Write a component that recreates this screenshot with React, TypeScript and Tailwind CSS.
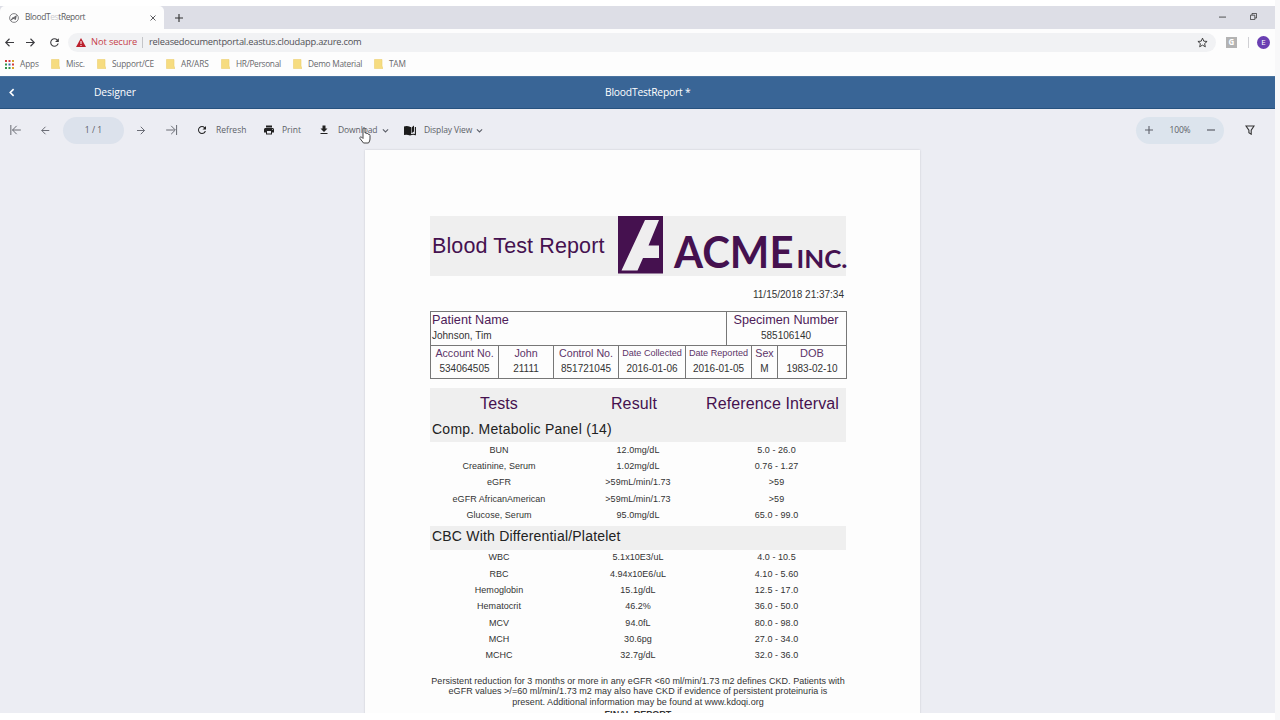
import React from "react";
import { MdFileDownload, MdPrint, MdRefresh } from "react-icons/md";

const bookmarks: [string, string, string][] = [
  ["Misc.", "w-[46px]", "tracking-[-0.2px]"],
  ["Support/CE", "w-[69px]", "tracking-[-0.2px]"],
  ["AR/ARS", "w-[55px]", "tracking-[-0.1px]"],
  ["HR/Personal", "w-[72px]", "tracking-[-0.3px]"],
  ["Demo Material", "w-[81px]", "tracking-[-0.25px]"],
  ["TAM", "w-[50px]", "tracking-[-0.2px]"],
];

const metabolic = [
  ["BUN", "12.0mg/dL", "5.0 - 26.0"],
  ["Creatinine, Serum", "1.02mg/dL", "0.76 - 1.27"],
  ["eGFR", ">59mL/min/1.73", ">59"],
  ["eGFR AfricanAmerican", ">59mL/min/1.73", ">59"],
  ["Glucose, Serum", "95.0mg/dL", "65.0 - 99.0"],
];

const cbc = [
  ["WBC", "5.1x10E3/uL", "4.0 - 10.5"],
  ["RBC", "4.94x10E6/uL", "4.10 - 5.60"],
  ["Hemoglobin", "15.1g/dL", "12.5 - 17.0"],
  ["Hematocrit", "46.2%", "36.0 - 50.0"],
  ["MCV", "94.0fL", "80.0 - 98.0"],
  ["MCH", "30.6pg", "27.0 - 34.0"],
  ["MCHC", "32.7g/dL", "32.0 - 36.0"],
];

const patientCells: [string, string, string, string][] = [
  ["Account No.", "534064505", "w-[68px]", "text-[10.7px]"],
  ["John", "21111", "w-[55px]", "text-[10.7px]"],
  ["Control No.", "851721045", "w-[65px]", "text-[10.7px]"],
  ["Date Collected", "2016-01-06", "w-[67px]", "text-[9.1px]"],
  ["Date Reported", "2016-01-05", "w-[66px]", "text-[9.1px]"],
  ["Sex", "M", "w-[26px]", "text-[10.7px]"],
  ["DOB", "1983-02-10", "w-[69px]", "text-[11px]"],
];

type IconProps = { d: string; size?: string; stroke?: number };

function Line({ d, size = "size-3", stroke = 1 }: IconProps) {
  return (
    <svg viewBox="0 0 12 12" className={size + " block shrink-0 overflow-visible"} fill="none" stroke="currentColor" strokeWidth={stroke}>
      <path d={d} />
    </svg>
  );
}

function Folder() {
  return (
    <svg viewBox="0 0 9 10" className="h-[10px] w-[9px] shrink-0">
      <path d="M0.5 0.5h7.5v6.5l1 2.5H0.5z" fill="#f6dc80" stroke="#ecd070" strokeWidth="0.6" />
    </svg>
  );
}

function Browser() {
  return (
    <header className="shrink-0 text-[#5c5c60]">
      <div className="flex h-[23px] bg-[#dddee6]">
        <div className="flex w-[164px] items-center rounded-t-[5px] bg-[#fdfdfd] pl-[9px]">
          <svg viewBox="0 0 10 10" className="size-[10px] shrink-0" fill="none" stroke="#66666a" strokeWidth="0.8">
            <circle cx="5" cy="5" r="4.4" />
            <path d="M2 7.2L4.2 5M4 5.2L7 3.2L6.4 6.2L4 5z" strokeWidth="1.2" />
          </svg>
          <span className="ml-[6px] w-[125px] text-[8.4px] tracking-[-0.35px]">
            BloodT<span className="text-[#cfcfd2]">es</span>tReport
          </span>
          <Line d="M1 1L11 11M11 1L1 11" size="size-[6px]" stroke={2} />
        </div>
        <div className="flex flex-1 items-center pl-[11px] text-[#333]">
          <Line d="M6 0V12M0 6H12" size="size-[8px]" stroke={1.7} />
          <div className="ml-auto flex items-center pb-[3px]">
            <Line d="M0 7H12" size="size-[7px]" stroke={1.4} />
            <svg viewBox="0 0 8 8" className="ml-[24px] mr-[18px] size-[7px]" fill="none" stroke="currentColor" strokeWidth="0.9">
              <path d="M0.5 2.5h5v5h-5zM2.3 2.3V0.5h5.2v5.2H5.7" />
            </svg>
          </div>
        </div>
      </div>
      <div className="flex h-[26px] items-center bg-[#fdfdfd] pl-[5px] text-[#3c3c40]">
        <div className="w-[21px]"><Line d="M12 6H1M6 1L1 6L6 11" size="size-[9px]" stroke={1.5} /></div>
        <div className="w-[22px]"><Line d="M0 6H11M6 1L11 6L6 11" size="size-[9px]" stroke={1.5} /></div>
        <div className="w-[20px] pr-[7px]"><MdRefresh className="size-[13px]" /></div>
        <div className="flex h-[19px] w-[1148px] items-center rounded-full bg-[#f1f2f4] pl-[8px] text-[9.3px]">
          <svg viewBox="0 0 10 9" className="h-[9px] w-[10px] shrink-0">
            <path d="M5 0L10 9H0z" fill="#bb1f2c" />
            <path d="M5 3V6M5 7V8" stroke="#fff" strokeWidth="1" />
          </svg>
          <span className="ml-[5px] w-[51px] whitespace-nowrap text-[#c6404a] tracking-[-0.1px]">Not secure</span>
          <span className="h-[11px] w-px bg-[#c4c5c8]" />
          <span className="ml-[6px] text-[#505055] tracking-[-0.22px]">releasedocumentportal.eastus.cloudapp.azure.com</span>
          <svg viewBox="0 0 24 24" className="ml-auto mr-[8px] size-[11px]" fill="none" stroke="#333" strokeWidth="2">
            <path d="M12 2.5l2.8 6.6 7.2.6-5.400 4.700 1.600 7L12 17.700l-6.200 3.700 1.600-7L2 9.700l7.200-.6z" />
          </svg>
        </div>
        <div className="ml-[10px] flex h-[11px] w-[11px] items-center justify-center bg-[#b3b3b3] text-[8px] font-bold text-white">G</div>
        <div className="ml-[11px] h-[11px] w-px bg-[#d0d0d4]" />
        <div className="ml-[8px] flex size-[13px] items-center justify-center rounded-full bg-[#6a3fb2] text-[8px] text-white">E</div>
      </div>
      <div className="flex h-[21px] items-center bg-[#fdfdfd] pb-[3px] pl-[5px] text-[8.3px] text-[#68686c]">
        <svg viewBox="0 0 9 9" className="mr-[6px] size-[9px]">
          {["#d23b3b", "#d23b3b", "#d6a52a", "#31934a", "#3a62b8", "#d23b3b", "#31934a", "#31934a", "#d6a52a"].map((c, i) => (
            <rect key={i} x={(i % 3) * 3.5} y={Math.floor(i / 3) * 3.5} width="2" height="2" fill={c} />
          ))}
        </svg>
        <span className="w-[31px] tracking-[-0.1px]">Apps</span>
        {bookmarks.map(([name, w, tracking]) => (
          <div key={name} className={"flex items-center gap-[6px] " + w}>
            <Folder />
            <span className={"whitespace-nowrap " + tracking}>{name}</span>
          </div>
        ))}
      </div>
    </header>
  );
}

function Toolbar() {
  return (
    <div className="flex h-[41px] shrink-0 items-center pl-[10px] pt-px text-[8.5px] text-[#5c5f68]">
      <div className="w-[31px]"><Line d="M1 0V12M13 6H3M8 1L3 6L8 11" size="size-[10px]" stroke={1.1} /></div>
      <div className="w-[22px]"><Line d="M11 6H1M6 1L1 6L6 11" size="size-[9px]" stroke={1.2} /></div>
      <div className="flex h-[27px] w-[61px] items-center justify-center rounded-full bg-[#dce2ec]">1 / 1</div>
      <div className="ml-[13px] w-[30px]"><Line d="M0 6H10M5 1L10 6L5 11" size="size-[9px]" stroke={1.2} /></div>
      <div className="w-[29px]"><Line d="M11.500 0V12M-1 6H9M5 1L10 6L5 11" size="size-[10px]" stroke={1.1} /></div>
      <MdRefresh className="size-[12px] text-[#222]" />
      <span className="ml-[8px] w-[47px]">Refresh</span>
      <MdPrint className="size-[12px] text-[#222]" />
      <span className="ml-[7px] w-[36px]">Print</span>
      <MdFileDownload className="size-[12px] text-[#222]" />
      <span className="ml-[8px] w-[44px] tracking-[-0.1px]">Download</span>
      <Line d="M1.500 4L6 8.500L10.500 4" size="size-[7px]" stroke={1.8} />
      <svg viewBox="0 0 12 11" className="ml-[15px] h-[11px] w-[12px] text-[#1c1c1c]">
        <path d="M0 1.500Q3 .500 6 1.800V10.500Q3 9.300 0 10z" fill="currentColor" />
        <path d="M6 9.900Q9 8.900 11.400 9.600V2M6.500 10V2" fill="none" stroke="currentColor" strokeWidth="1.100" />
        <path d="M7.600 2.500L10 .500V6.500L7.600 8.300z" fill="currentColor" />
      </svg>
      <span className="ml-[8px] w-[52px] whitespace-nowrap tracking-[-0.1px]">Display View</span>
      <Line d="M1.500 4L6 8.500L10.500 4" size="size-[7px]" stroke={1.8} />
      <div className="ml-auto mr-[21px] flex h-[27px] w-[88px] items-center justify-between rounded-full bg-[#dce4ed] px-[9px]">
        <Line d="M6 0V12M0 6H12" size="size-[8px]" stroke={1.600} />
        <span className="tracking-[-0.2px]">100%</span>
        <Line d="M0 6H12" size="size-[8px]" stroke={1.800} />
      </div>
      <svg viewBox="0 0 10 10" className="mr-[20px] size-[10px]" fill="none" stroke="#333" strokeWidth="1.100">
        <path d="M1 1H9L6.200 5.200V9.200L3.900 7.800V5.200z" />
      </svg>
    </div>
  );
}

function AcmeLogo() {
  return (
    <svg viewBox="0 0 229 60" className="h-[60px] w-[229px] shrink-0 overflow-visible" fill="#45114f">
      <rect x="1" y="0" width="45" height="57.500" />
      <path d="M28 4H42L31.500 29.500H42V42H26L20.500 54.500H4.500z" fill="#efeeef" />
      <g fontFamily="Lato, sans-serif" fontWeight="700">
        <text x="57" y="52" fontSize="44.500" textLength="119.500" lengthAdjust="spacingAndGlyphs">ACME</text>
        <text x="179.500" y="52" fontSize="25.500" textLength="51" lengthAdjust="spacingAndGlyphs">INC.</text>
      </g>
    </svg>
  );
}

function Results({ rows }: { rows: string[][] }) {
  return (
    <>
      {rows.map((row) => (
        <div key={row[0]} className="flex h-[16.33px] items-center text-center text-[9px] leading-none tracking-[0.040px] text-[#333]">
          <span className="w-[138px]">{row[0]}</span>
          <span className="w-[140px]">{row[1]}</span>
          <span className="w-[137px]">{row[2]}</span>
        </div>
      ))}
    </>
  );
}

function Report() {
  return (
    <article className="ml-[365px] h-[600px] w-[555px] bg-[#fdfdfd] pl-[65px] pr-[74px] pt-[66px] font-['Liberation_Sans',sans-serif] shadow-[0_0_2px_rgba(0,0,0,0.15)]">
      <div className="flex h-[60px] items-center bg-[#efefef] pl-[2px]">
        <h1 className="w-[185px] shrink-0 whitespace-nowrap text-[21.500px] tracking-[0.120px] text-[#45114f]">Blood Test Report</h1>
        <AcmeLogo />
      </div>
      <p className="mt-[11px] h-[15px] pr-[2px] text-right text-[10px] leading-[15px] text-[#333]">11/15/2018 21:37:34</p>
      <section className="mt-[9px] w-[417px] border border-[#777]">
        <div className="flex h-[34px] border-b border-[#777]">
          <div className="w-[296px] border-r border-[#777] pl-px">
            <p className="h-[17px] text-[12.700px] leading-[17px] text-[#4d2058]">Patient Name</p>
            <p className="text-[10px] leading-[14px] text-[#333]">Johnson, Tim</p>
          </div>
          <div className="flex-1 pr-px text-center">
            <p className="h-[17px] text-[12.700px] leading-[17px] text-[#4d2058]">Specimen Number</p>
            <p className="text-[10px] leading-[14px] text-[#333]">585106140</p>
          </div>
        </div>
        <div className="flex h-[32px]">
          {patientCells.map(([label, value, w, size]) => (
            <div key={label} className={"shrink-0 whitespace-nowrap border-r border-[#777] text-center last:shrink last:border-r-0 " + w}>
              <p className={"h-[15px] leading-[14px] text-[#5c3468] " + size}>{label}</p>
              <p className="text-[10px] leading-[16px] text-[#333]">{value}</p>
            </div>
          ))}
        </div>
      </section>
      <section className="mt-[9px] h-[54px] bg-[#efefef]">
        <div className="flex h-[32px] items-center text-center text-[16px] tracking-[0.130px] text-[#45114f]">
          <span className="w-[138px]">Tests</span>
          <span className="w-[132px]">Result</span>
          <span className="w-[145px]">Reference Interval</span>
        </div>
        <h2 className="pl-[2px] text-[14px] leading-[18px] tracking-[0.250px] text-[#222]">Comp. Metabolic Panel (14)</h2>
      </section>
      <Results rows={metabolic} />
      <h2 className="mt-[2px] h-[24px] bg-[#efefef] pl-[2px] text-[14px] leading-[20px] tracking-[0.200px] text-[#222]">CBC With Differential/Platelet</h2>
      <Results rows={cbc} />
      <div className="mt-[12px] whitespace-nowrap text-center text-[9px] leading-[10.330px] tracking-[0.040px] text-[#333]">
        <p>Persistent reduction for 3 months or more in any eGFR &lt;60 ml/min/1.73 m2 defines CKD. Patients with</p>
        <p>eGFR values &gt;/=60 ml/min/1.73 m2 may also have CKD if evidence of persistent proteinuria is</p>
        <p>present. Additional information may be found at www.kdoqi.org</p>
        <p className="mt-[2px] font-bold">FINAL REPORT</p>
      </div>
    </article>
  );
}

export default function App() {
  return (
    <div className="relative h-[720px] w-[1280px] overflow-hidden bg-[#f8f8f9] font-['Open_Sans','Noto_Sans',sans-serif]">
      <div className="flex h-[720px] w-[1275px] flex-col bg-white pb-[7px] pt-[6px]">
        <Browser />
        <nav className="flex h-[33px] shrink-0 items-center border-y border-t-[#4a739f] border-b-[#27527f] bg-[#396596] pl-[8px] text-[10.300px] text-white">
          <div className="w-[86px]"><Line d="M7.500 1.500L3 6L7.500 10.500" size="size-[9px]" stroke={2.200} /></div>
          <span className="w-[511px] tracking-[-0.100px]">Designer</span>
          <span className="tracking-[-0.200px]">BloodTestReport *</span>
        </nav>
        <main className="min-h-0 flex-1 overflow-hidden bg-[#ecedf3]">
          <Toolbar />
          <Report />
        </main>
      </div>
      <svg viewBox="0 0 12 17" className="absolute left-[359px] top-[127px] h-[17px] w-[12px]" fill="#fff" stroke="#444" strokeWidth="1">
        <path d="M4 10V2Q4 .700 5 .700T6 2V6Q7.200 5.400 7.600 6.600Q9 6 9.300 7.300Q11 7 11 8.500V12Q11 14 9.500 16H4.500L1 11.500Q.400 10.400 1.500 10T4 11.500z" />
      </svg>
    </div>
  );
}
